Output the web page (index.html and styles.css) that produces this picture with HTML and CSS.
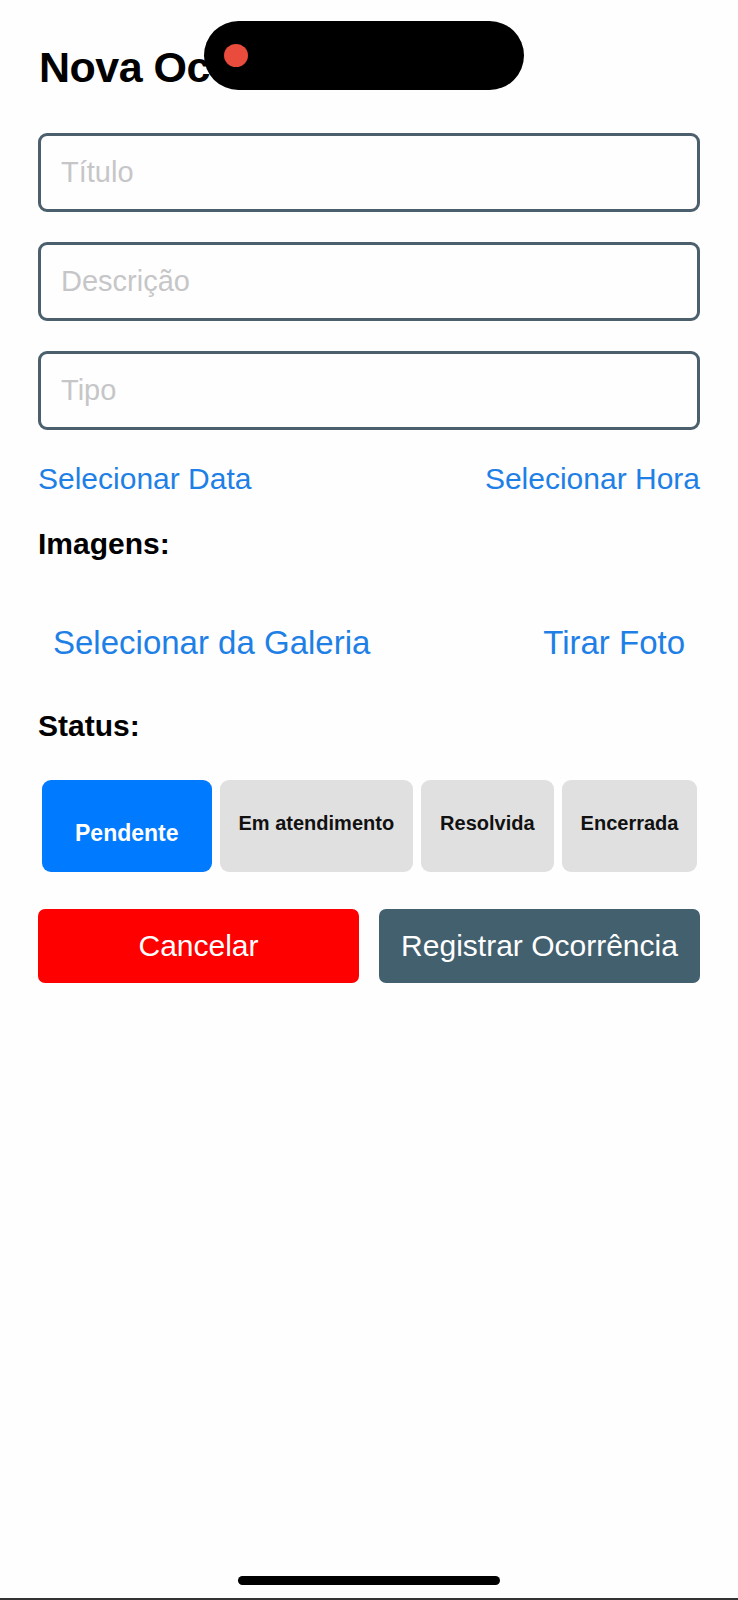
FILE: index.html
```html
<!DOCTYPE html>
<html lang="pt">
<head>
<meta charset="utf-8">
<title>Nova Ocorrência</title>
<link rel="stylesheet" href="styles.css">
</head>
<body>
<div class="screen">
  <h1 class="title">Nova Ocorrência</h1>

  <div class="field"><span class="placeholder">Título</span></div>
  <div class="field"><span class="placeholder">Descrição</span></div>
  <div class="field"><span class="placeholder">Tipo</span></div>

  <div class="link-row">
    <span class="link">Selecionar Data</span>
    <span class="link">Selecionar Hora</span>
  </div>

  <div class="label label-images">Imagens:</div>

  <div class="image-row">
    <span class="link link-lg">Selecionar da Galeria</span>
    <span class="link link-lg">Tirar Foto</span>
  </div>

  <div class="label label-status">Status:</div>

  <div class="status-row">
    <div class="status status-active">Pendente</div>
    <div class="status">Em atendimento</div>
    <div class="status">Resolvida</div>
    <div class="status">Encerrada</div>
  </div>

  <div class="actions">
    <div class="btn btn-cancel">Cancelar</div>
    <div class="btn btn-submit">Registrar Ocorrência</div>
  </div>
</div>

<div class="island"><span class="rec-dot"></span></div>
<div class="home-bar"></div>
<div class="bottom-edge"></div>
</body>
</html>
```

FILE: styles.css
```css
html, body {
  margin: 0;
  padding: 0;
  background: #fefefe;
}

body {
  width: 738px;
  height: 1600px;
  position: relative;
  overflow: hidden;
  font-family: "Liberation Sans", Arial, sans-serif;
  color: #000;
}

.screen {
  padding: 41px 38px 0 38px;
  display: flex;
  flex-direction: column;
}

.title {
  margin: 0 0 40px 1px;
  font-size: 43px;
  line-height: 52px;
  font-weight: 700;
  letter-spacing: -0.5px;
  white-space: nowrap;
}

.field {
  box-sizing: border-box;
  height: 79px;
  border: 3px solid #4b606c;
  border-radius: 9px;
  margin-bottom: 30px;
  display: flex;
  align-items: center;
  padding-left: 20px;
}

.field:nth-of-type(3) {
  margin-bottom: 31px;
}

.placeholder {
  font-size: 29px;
  color: #c6c6c8;
}

.link-row {
  display: flex;
  justify-content: space-between;
  line-height: 36px;
}

.link {
  font-size: 30px;
  color: #1e80e6;
}

.label {
  font-size: 30px;
  line-height: 36px;
  font-weight: 700;
}

.label-images {
  margin-top: 29px;
}

.image-row {
  margin-top: 61px;
  padding: 0 15px;
  display: flex;
  justify-content: space-between;
  line-height: 40px;
}

.link-lg {
  font-size: 33px;
}

.label-status {
  margin-top: 45px;
}

.status-row {
  margin-top: 36px;
  padding: 0 4px;
  display: flex;
  gap: 8px;
}

.status {
  box-sizing: border-box;
  height: 92px;
  padding: 31px 19px 0 19px;
  background: #e0e0e0;
  border-radius: 9px;
  font-size: 20px;
  line-height: 24px;
  font-weight: 700;
  color: #111;
  text-align: center;
  white-space: nowrap;
}

.status-active {
  padding: 39px 33px 0 33px;
  background: #007aff;
  color: #fff;
  font-size: 23px;
  line-height: 28px;
}

.actions {
  margin-top: 37px;
  display: flex;
  gap: 20px;
}

.btn {
  flex: 1;
  height: 74px;
  border-radius: 7px;
  display: flex;
  align-items: center;
  justify-content: center;
  font-size: 30px;
  color: #fff;
}

.btn-cancel {
  background: #ff0000;
}

.btn-submit {
  background: #43606f;
}

.island {
  position: absolute;
  left: 204px;
  top: 21px;
  width: 320px;
  height: 69px;
  background: #000;
  border-radius: 35px;
}

.rec-dot {
  position: absolute;
  left: 20px;
  top: 23px;
  width: 24px;
  height: 23px;
  border-radius: 50%;
  background: #e94b3c;
}

.home-bar {
  position: absolute;
  left: 238px;
  top: 1576px;
  width: 262px;
  height: 9px;
  border-radius: 5px;
  background: #000;
}

.bottom-edge {
  position: absolute;
  left: 0;
  bottom: 0;
  width: 738px;
  height: 2px;
  background: #333;
}
```
